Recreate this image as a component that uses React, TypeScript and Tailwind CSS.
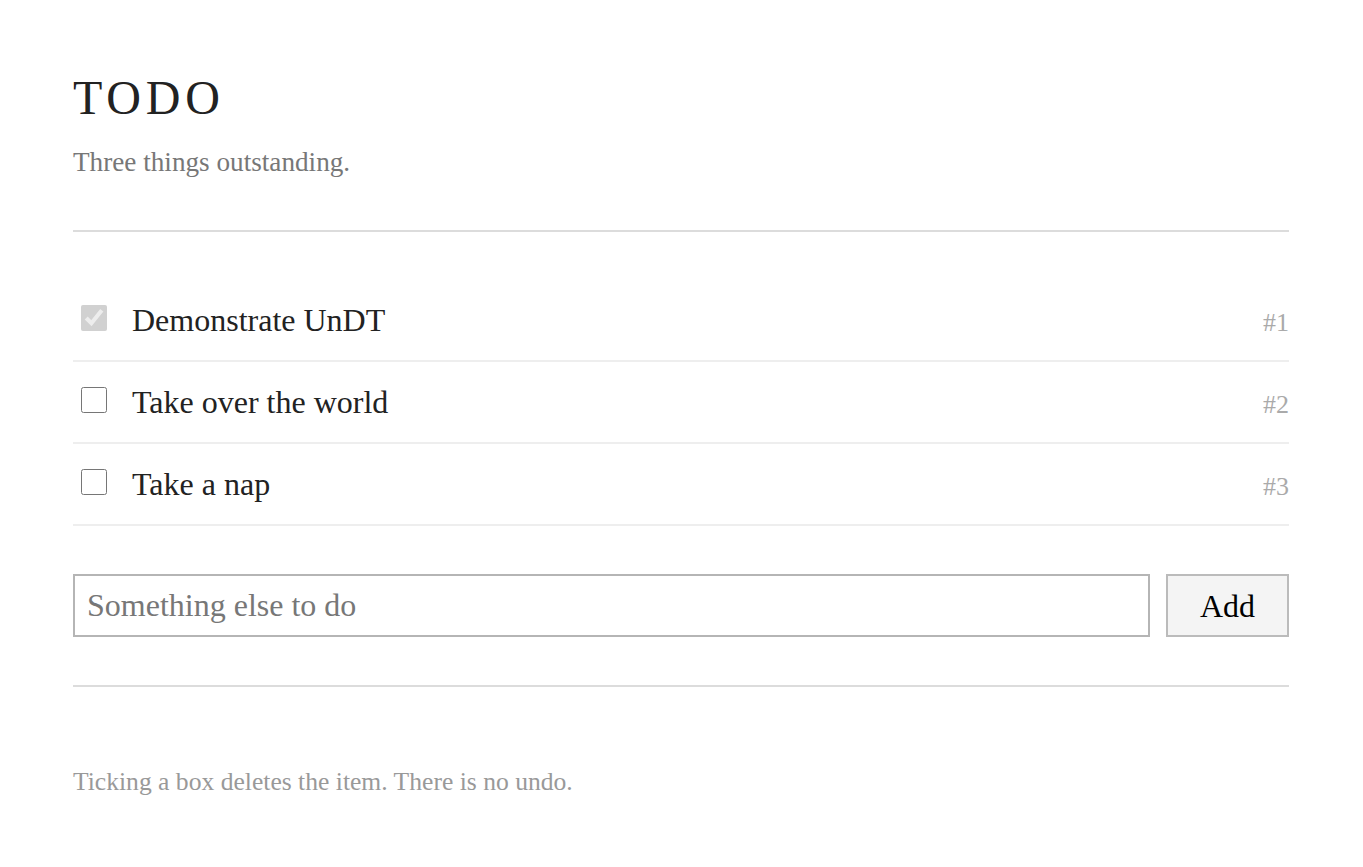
import React from "react";

const items = [
  { id: 1, text: "Demonstrate UnDT", done: true },
  { id: 2, text: "Take over the world", done: false },
  { id: 3, text: "Take a nap", done: false },
];

export default function App() {
  return (
    <div className="min-h-screen bg-white" style={{ fontFamily: '"Liberation Serif", "Times New Roman", serif' }}>
      <div className="pl-[73px] pr-[74px] pt-[70px]">
        <h1 className="text-[48px] leading-[56px] tracking-[0.1em] text-[#222]">TODO</h1>
        <p className="mt-[20px] text-[27.2px] leading-[32px] text-[#777]">Three things outstanding.</p>
        <div className="mt-[52px] h-[2px] bg-[#dcdcdc]" />
        <ul className="mt-[48px]">
          {items.map((it) => (
            <li key={it.id} className="flex h-[82px] items-center border-b-2 border-[#eeeeee]">
              <input
                type="checkbox"
                defaultChecked={it.done}
                disabled={it.done}
                className="mb-[4px] ml-[8px] h-[26px] w-[26px] shrink-0"
              />
              <span className="ml-[25px] flex-1 text-[32px] leading-[40px] text-[#222]">{it.text}</span>
              <span className="self-center pt-[5px] text-[26px] leading-[40px] text-[#aaa]">#{it.id}</span>
            </li>
          ))}
        </ul>
        <form className="mt-[48px] flex gap-[16px]" onSubmit={(e) => e.preventDefault()}>
          <input
            type="text"
            placeholder="Something else to do"
            className="h-[63px] flex-1 border-2 border-[#b5b5b5] px-[12px] text-[32px] text-[#222] outline-none placeholder:text-[#777]"
          />
          <button type="submit" className="h-[63px] w-[123px] border-2 border-[#bbbbbb] bg-[#f4f4f4] text-[32px] text-black">
            Add
          </button>
        </form>
        <div className="mt-[48px] h-[2px] bg-[#dcdcdc]" />
        <p className="mt-[80px] text-[25.6px] leading-[30px] text-[#999]">Ticking a box deletes the item. There is no undo.</p>
      </div>
    </div>
  );
}
